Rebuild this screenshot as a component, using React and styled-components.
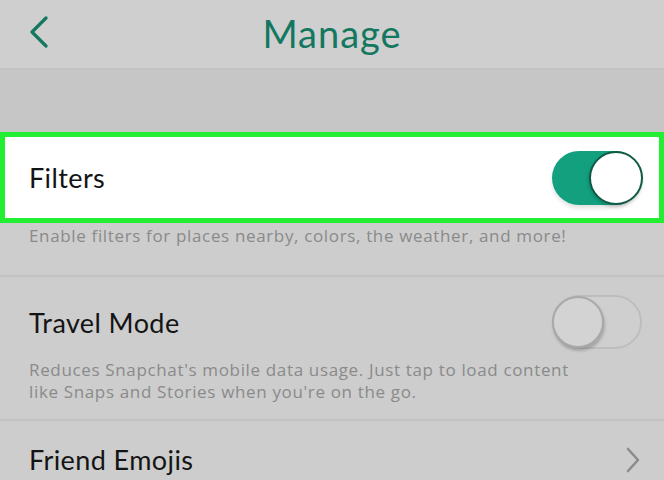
import React from 'react'
import styled, { createGlobalStyle } from 'styled-components'

const Global = createGlobalStyle`
  html, body {
    margin: 0;
    padding: 0;
    background: #cdcdcd;
    font-family: Lato, "Open Sans", sans-serif;
  }
`

const Page = styled.div`
  width: 664px;
  height: 480px;
  overflow: hidden;
  background: #cdcdcd;
`

const Header = styled.div`
  height: 68px;
  display: flex;
  align-items: center;
  justify-content: center;
  position: relative;
  background: #cfcfcf;
  border-bottom: 2px solid #c3c3c3;
`

const Back = styled.div`
  position: absolute;
  left: 28px;
  top: 16px;
  width: 22px;
  height: 32px;
`

const Title = styled.h1`
  margin: -3px 0 0 0;
  font-size: 38px;
  font-weight: 400;
  color: #13785f;
  letter-spacing: 1px;
`

const Spacer = styled.div`
  height: 62px;
  background: #c6c6c6;
`

const Section = styled.div`
  border-bottom: ${p => (p.last ? 'none' : '2px solid #c2c2c2')};
`

const Row = styled.div`
  display: flex;
  align-items: center;
  justify-content: space-between;
  padding: ${p => p.pad || '18px 22px 0 29px'};
  background: ${p => (p.highlight ? '#fff' : 'transparent')};
  border: ${p => (p.highlight ? '5px solid #22ee33' : 'none')};
  height: ${p => p.h || 'auto'};
  box-sizing: border-box;
`

const Label = styled.span`
  font-size: 27px;
  color: #141414;
  letter-spacing: 0.4px;
`

const Note = styled.p`
  margin: 0;
  padding: ${p => p.pad || '10px 20px 16px 29px'};
  font-family: "Open Sans", Lato, sans-serif;
  font-size: 17px;
  line-height: 22px;
  color: #8a8a8a;
  letter-spacing: 0.65px;
  white-space: nowrap;
`

const Track = styled.div`
  width: 90px;
  height: 54px;
  border-radius: 27px;
  box-sizing: border-box;
  display: flex;
  justify-content: ${p => (p.on ? 'flex-end' : 'flex-start')};
  background: ${p => (p.on ? '#12a07f' : '#cfcfcf')};
  border: ${p => (p.on ? 'none' : '2px solid #bdbdbd')};
  box-shadow: ${p => (p.on ? '0 3px 4px rgba(0,0,0,0.12)' : 'none')};
`

const Knob = styled.div`
  width: ${p => (p.on ? '54px' : '52px')};
  height: ${p => (p.on ? '54px' : '52px')};
  margin: ${p => (p.on ? '0 -1px 0 0' : '-1px 0 0 -2px')};
  border-radius: 50%;
  box-sizing: border-box;
  background: ${p => (p.on ? '#fff' : '#d3d3d3')};
  border: ${p => (p.on ? '2px solid #0f5a44' : '2px solid #a9a9a9')};
  box-shadow: ${p => (p.on ? '-1px 2px 3px rgba(0,0,0,0.15)' : '1px 3px 3px rgba(0,0,0,0.2)')};
`

const Chevron = styled.svg`
  width: 16px;
  height: 26px;
  margin-right: 1px;
`

const Toggle = ({ on }) => (
  <Track on={on}>
    <Knob on={on} />
  </Track>
)

export default function App() {
  return (
    <Page>
      <Global />
      <Header>
        <Back>
          <svg width="22" height="32" viewBox="0 0 22 32">
            <path d="M18 2 L4 16 L18 30" fill="none" stroke="#13785f" strokeWidth="3.2" strokeLinecap="round" strokeLinejoin="round" />
          </svg>
        </Back>
        <Title>Manage</Title>
      </Header>
      <Spacer />
      <Section>
        <Row highlight h="91px" pad="0 17px 0 24px">
          <Label>Filters</Label>
          <Toggle on />
        </Row>
        <Note pad="2px 20px 28px 29px">Enable filters for places nearby, colors, the weather, and more!</Note>
      </Section>
      <Section>
        <Row>
          <Label>Travel Mode</Label>
          <Toggle />
        </Row>
        <Note>
          Reduces Snapchat's mobile data usage. Just tap to load content<br />
          like Snaps and Stories when you're on the go.
        </Note>
      </Section>
      <Section last>
        <Row pad="22px 22px 0 29px">
          <Label>Friend Emojis</Label>
          <Chevron viewBox="0 0 16 26">
            <path d="M3 2 L13 13 L3 24" fill="none" stroke="#8c8c8c" strokeWidth="2.6" strokeLinecap="round" strokeLinejoin="round" />
          </Chevron>
        </Row>
      </Section>
    </Page>
  )
}
